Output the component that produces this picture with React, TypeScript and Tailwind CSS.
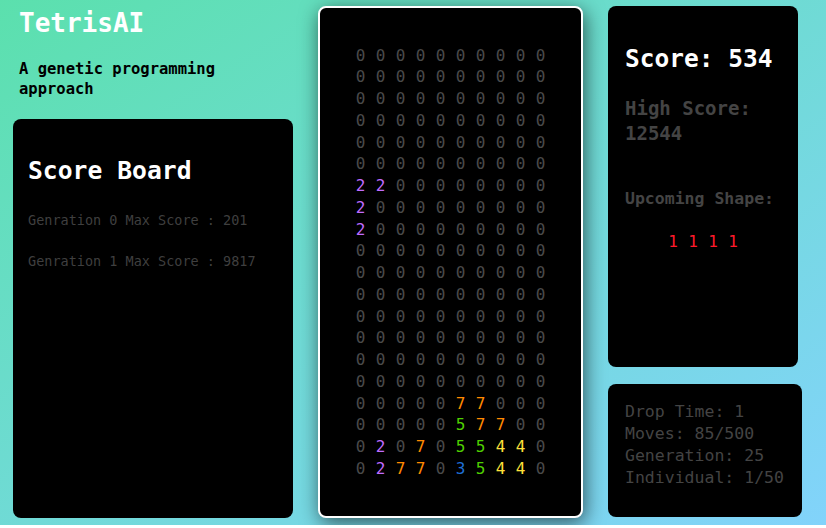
const board: number[][] = [
  [0, 0, 0, 0, 0, 0, 0, 0, 0, 0],
  [0, 0, 0, 0, 0, 0, 0, 0, 0, 0],
  [0, 0, 0, 0, 0, 0, 0, 0, 0, 0],
  [0, 0, 0, 0, 0, 0, 0, 0, 0, 0],
  [0, 0, 0, 0, 0, 0, 0, 0, 0, 0],
  [0, 0, 0, 0, 0, 0, 0, 0, 0, 0],
  [2, 2, 0, 0, 0, 0, 0, 0, 0, 0],
  [2, 0, 0, 0, 0, 0, 0, 0, 0, 0],
  [2, 0, 0, 0, 0, 0, 0, 0, 0, 0],
  [0, 0, 0, 0, 0, 0, 0, 0, 0, 0],
  [0, 0, 0, 0, 0, 0, 0, 0, 0, 0],
  [0, 0, 0, 0, 0, 0, 0, 0, 0, 0],
  [0, 0, 0, 0, 0, 0, 0, 0, 0, 0],
  [0, 0, 0, 0, 0, 0, 0, 0, 0, 0],
  [0, 0, 0, 0, 0, 0, 0, 0, 0, 0],
  [0, 0, 0, 0, 0, 0, 0, 0, 0, 0],
  [0, 0, 0, 0, 0, 7, 7, 0, 0, 0],
  [0, 0, 0, 0, 0, 5, 7, 7, 0, 0],
  [0, 2, 0, 7, 0, 5, 5, 4, 4, 0],
  [0, 2, 7, 7, 0, 3, 5, 4, 4, 0],
]

// one colour per piece id
const cellColor: Record<number, string> = {
  0: "text-[#4a4a4a]",
  1: "text-[#ff1a2a]",
  2: "text-[#c06cff]",
  3: "text-[#1f6fd6]",
  4: "text-[#ffe03a]",
  5: "text-[#4fd000]",
  7: "text-[#ff8a00]",
}

const generations = [
  { gen: 0, score: 201 },
  { gen: 1, score: 9817 },
]

export default function App() {
  return (
    <div className="h-[525px] w-full flex bg-gradient-to-br from-[#5be0ad] to-[#82d3fb] font-['DejaVu_Sans_Mono',monospace]">
      {/* left column */}
      <div className="ml-[13px] w-[280px] flex flex-col">
        <h1 className="mt-[8px] ml-[6px] text-[26px] leading-[30px] font-bold text-white">TetrisAI</h1>
        <p className="mt-[21px] ml-[6px] text-[15.5px] leading-[20px] font-bold text-black w-[220px]">
          A genetic programming approach
        </p>
        <div className="mt-[20px] h-[399px] bg-black rounded-lg pt-[37px] px-[15px]">
          <h2 className="text-[24.7px] leading-[30px] font-bold text-white">Score Board</h2>
          <div className="mt-[24px] flex flex-col gap-[21px]">
            {generations.map((g) => (
              <p key={g.gen} className="text-[13.5px] leading-[20px] text-[#3f3f3f]">
                Genration {g.gen} Max Score : {g.score}
              </p>
            ))}
          </div>
        </div>
      </div>

      {/* game board */}
      <div className="ml-[25px] mt-[6px] w-[265px] h-[512px] bg-black border-2 border-white rounded-lg shadow-[2px_5px_20px_rgba(0,0,0,0.6)] flex items-center justify-center">
        <div className="flex flex-col">
          {board.map((row, r) => (
            <div key={r} className="flex">
              {row.map((v, c) => (
                <span key={c} className={`w-[20px] text-center text-[16px] leading-[21.75px] ${cellColor[v]}`}>
                  {v}
                </span>
              ))}
            </div>
          ))}
        </div>
      </div>

      {/* right column */}
      <div className="ml-[25px] flex flex-col">
        <div className="mt-[6px] w-[190px] h-[361px] bg-black rounded-lg pt-[38px] px-[17px]">
          <h2 className="text-[24.5px] leading-[30px] font-bold text-white">Score: 534</h2>
          <p className="mt-[22px] text-[19px] leading-[25px] font-semibold text-[#444444]">
            High Score:
            <br />
            12544
          </p>
          <p className="mt-[42px] text-[16.5px] leading-[22px] font-semibold text-[#444444]">Upcoming Shape:</p>
          <div className="mt-[21px] flex justify-center">
            {[1, 1, 1, 1].map((v, i) => (
              <span key={i} className={`w-[20px] text-center text-[16px] leading-[22px] ${cellColor[v]}`}>
                {v}
              </span>
            ))}
          </div>
        </div>
        <div className="mt-[17px] w-[194px] h-[133px] bg-black rounded-lg pt-[17px] px-[17px] text-[16.5px] leading-[22px] text-[#444444]">
          <p>Drop Time: 1</p>
          <p>Moves: 85/500</p>
          <p>Generation: 25</p>
          <p>Individual: 1/50</p>
        </div>
      </div>
    </div>
  )
}
